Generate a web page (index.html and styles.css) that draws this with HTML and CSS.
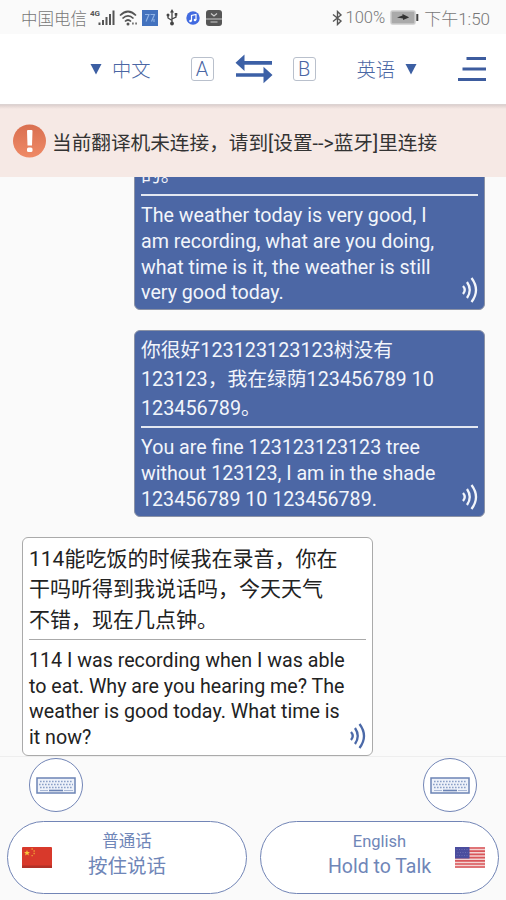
FILE: index.html
```html
<!DOCTYPE html>
<html lang="zh-CN">
<head>
  <meta charset="UTF-8" />
  <meta name="viewport" content="width=device-width, initial-scale=1.0"/>
  <title>翻译机</title>
  <link rel="stylesheet" href="styles.css">
</head>
<body>
  <svg class="defs" width="0" height="0">
    <symbol id="sound" viewBox="0 0 18 28">
      <path d="M2 10Q5.500 14 2 18M6 6Q11.500 14 6 22M10.500 2Q19.500 14 10.500 26" fill="none" stroke="currentColor" stroke-width="2.300"/>
    </symbol>
    <symbol id="keyboard" viewBox="0 0 40 17">
      <rect x="1" y="1" width="38" height="15" fill="#eef2fa" stroke="#6c84b5" stroke-width="1.500"/>
      <path d="M4 4.500H37M3 7.500H37M4 10.500H37" stroke="#8ba0c8" stroke-width="1.600" stroke-dasharray="1.600 1.400"/>
      <path d="M4 13.500H12M28 13.500H37" stroke="#a9b8d6" stroke-width="1"/>
      <path d="M13 13.500H27" stroke="#6c84b5" stroke-width="1.600"/>
    </symbol>
  </svg>

  <div class="status">
    <span class="carrier">中国电信</span>
    <svg class="signal" width="27" height="18" viewBox="0 0 27 18">
      <text x="0" y="7" class="net">4G</text>
      <path d="M9.500 16V13.500M13 16V11M16.500 16V8M20 16V5M23.500 16V1.500" stroke="#555" stroke-width="2"/>
    </svg>
    <svg class="wifi" width="19" height="18" viewBox="0 0 19 18">
      <path d="M1 6.500Q9 -1.500 17 6.500M3.500 9.500Q9 4 14.500 9.500M6 12.500Q9 9.500 12 12.500" fill="none" stroke="#555" stroke-width="1.700"/>
      <circle cx="9" cy="15" r="1.500" fill="#555"/>
      <path d="M13 14.500h1.800M16.200 14.500h1.800" stroke="#777" stroke-width="2"/>
    </svg>
    <svg class="app" width="16" height="16" viewBox="0 0 16 16">
      <rect width="16" height="16" fill="#4372be"/>
      <path d="M3 4.500h4l-3 7M8.500 4.500h4l-3 7M12 9v3" fill="none" stroke="#8fb3e6" stroke-width="1.100"/>
    </svg>
    <svg class="usb" width="12" height="17" viewBox="0 0 12 17">
      <path d="M6 2V14M6 11.500L2 9V6M6 10L10 8V5" fill="none" stroke="#444" stroke-width="1.300"/>
      <path d="M6 0L8 3.500H4z" fill="#444"/>
      <circle cx="6" cy="14.500" r="1.900" fill="#444"/>
      <circle cx="2" cy="6" r="1.500" fill="#444"/>
      <path d="M8.700 4h2.600v2.600h-2.600z" fill="#444"/>
    </svg>
    <svg class="music" width="14" height="14" viewBox="0 0 14 14">
      <circle cx="7" cy="7" r="6.700" fill="#426be0"/>
      <path d="M5.500 10V4.500L10 3.500V9" fill="none" stroke="#fff" stroke-width="1.200"/>
      <circle cx="4.500" cy="10" r="1.300" fill="#fff"/>
      <circle cx="9" cy="9" r="1.300" fill="#fff"/>
    </svg>
    <svg class="box" width="16" height="16" viewBox="0 0 16 16">
      <rect width="16" height="16" rx="3" fill="#565656"/>
      <path d="M0 9H16" stroke="#ccc" stroke-width="1"/>
      <path d="M5 3.500L8 6L11 3.500M4.500 12H11.500" fill="none" stroke="#ccc" stroke-width="1.200"/>
    </svg>
    <span class="spacer"></span>
    <svg class="bt" width="11" height="16" viewBox="0 0 11 16">
      <path d="M1 4.500L9 11L5.500 14.500V1.500L9 5L1 11.500" fill="none" stroke="#555" stroke-width="1.400"/>
    </svg>
    <span class="percent">100%</span>
    <svg class="battery" width="29" height="15" viewBox="0 0 29 15">
      <rect x="1" y="1" width="24" height="13" rx="1.500" fill="#aaa" stroke="#ccc" stroke-width="1.500"/>
      <path d="M7 7.500L12.500 5.500V4L18.500 7L19 7.500L13 10V8.500z" fill="#333"/>
      <path d="M27.300 4V11" stroke="#444" stroke-width="2"/>
    </svg>
    <span class="time">下午1:50</span>
  </div>

  <div class="header">
    <svg class="arrow" width="12" height="11" viewBox="0 0 12 11"><path d="M0.500 0H11.500L6 10.500z" fill="#3c5fa3"/></svg>
    <span class="lang">中文</span>
    <span class="letter letter-a">A</span>
    <svg class="swap" width="38" height="30" viewBox="0 0 38 30">
      <path d="M7 8.800H37M1 21H31" stroke="#3c60a6" stroke-width="3.700"/>
      <path d="M0.500 8.800L9.500 0.500V17zM37.500 21L28.500 12.700V29.300z" fill="#3c60a6"/>
    </svg>
    <span class="letter letter-b">B</span>
    <span class="lang lang-b">英语</span>
    <svg class="arrow arrow-b" width="12" height="11" viewBox="0 0 12 11"><path d="M0.500 0H11.500L6 10.500z" fill="#3c5fa3"/></svg>
    <svg class="menu" width="28" height="26" viewBox="0 0 28 26">
      <path d="M8.500 2.500H28M4.500 13H28M0 23.500H28" stroke="#3d5c9e" stroke-width="3"/>
    </svg>
  </div>

  <div class="warning">
    <svg width="34" height="34" viewBox="0 0 34 34">
      <defs>
        <linearGradient id="orange" x1="0" y1="0" x2="0" y2="1">
          <stop offset="0" stop-color="#d96f50"/>
          <stop offset="1" stop-color="#ef8a66"/>
        </linearGradient>
      </defs>
      <circle cx="17.500" cy="17" r="16.500" fill="url(#orange)"/>
      <path d="M15 7Q15 6 16 6H19.500Q20.500 6 20.500 7L20 21.500H15.500z" fill="#fff"/>
      <rect x="15" y="23.500" width="5.500" height="4.500" rx="1.500" fill="#fff"/>
    </svg>
    <span>当前翻译机未连接，请到[设置--&gt;蓝牙]里连接</span>
  </div>

  <div class="chat">
    <div class="bubble mine">
      <div class="source">的。</div>
      <div class="result">The weather today is very good, I<br>am recording, what are you doing,<br>what time is it, the weather is still<br>very good today.</div>
      <svg class="sound"><use href="#sound"/></svg>
    </div>
    <div class="bubble mine">
      <div class="source">你很好123123123123树没有<br>123123，我在绿荫123456789 10<br>123456789。</div>
      <div class="result">You are fine 123123123123 tree<br>without 123123, I am in the shade<br>123456789 10 123456789.</div>
      <svg class="sound"><use href="#sound"/></svg>
    </div>
    <div class="bubble other">
      <div class="source">114能吃饭的时候我在录音，你在<br>干吗听得到我说话吗，今天天气<br>不错，现在几点钟。</div>
      <div class="result">114 I was recording when I was able<br>to eat. Why are you hearing me? The<br>weather is good today. What time is<br>it now?</div>
      <svg class="sound"><use href="#sound"/></svg>
    </div>
  </div>

  <div class="footer">
    <div class="keys">
      <div class="key"><svg width="40" height="17"><use href="#keyboard"/></svg></div>
      <div class="key"><svg width="40" height="17"><use href="#keyboard"/></svg></div>
    </div>
    <div class="talks">
      <div class="talk">
        <svg class="flag" width="30" height="21" viewBox="0 0 30 21">
          <rect width="30" height="21" rx="1" fill="#d8392b"/>
          <rect y="18.500" width="30" height="2.500" fill="#b23127"/>
          <path d="M5 3L5.800 4.900L7.900 5L6.300 6.400L6.900 8.500L5 7.300L3.100 8.500L3.700 6.400L2.100 5L4.200 4.900z" fill="#f8c43c"/>
          <path d="M9.500 2h1.300M11.500 4h1.300M11.500 6.500h1.300M9.500 8.700h1.300" stroke="#f0a236" stroke-width="1.300"/>
        </svg>
        <div class="label"><span class="small">普通话</span><span class="big">按住说话</span></div>
      </div>
      <div class="talk talk-b">
        <div class="label"><span class="small">English</span><span class="big">Hold to Talk</span></div>
        <svg class="flag" width="30" height="21" viewBox="0 0 30 21">
          <rect width="30" height="21" rx="1" fill="#f3d3d2"/>
          <path d="M0 1H30M0 4.200H30M0 7.400H30M0 10.600H30M0 13.800H30M0 17H30M0 20H30" stroke="#d9565a" stroke-width="1.700"/>
          <rect width="14.500" height="11.500" fill="#4b4d9e"/>
          <path d="M1.500 2.500H13M2.500 5.500H13M1.500 8.500H13" stroke="#6a6cb0" stroke-width="1" stroke-dasharray="1 1.500"/>
        </svg>
      </div>
    </div>
  </div>
</body>
</html>
```

FILE: styles.css
```css
* {
  box-sizing: border-box;
}
body {
  margin: 0;
  width: 506px;
  height: 900px;
  overflow: hidden;
  display: flex;
  flex-direction: column;
  background: #fafafa;
  font-family: Roboto, "Noto Sans CJK SC", sans-serif;
  white-space: nowrap;
}
svg {
  display: block;
  flex: none;
}
.defs {
  position: absolute;
}
.status {
  height: 34px;
  flex: none;
  display: flex;
  align-items: center;
  padding: 1px 16px 0 21px;
  color: #777;
  font-size: 16.5px;
  font-weight: 300;
}
.signal {
  margin-left: 3px;
}
.net {
  font: bold 8px Roboto, sans-serif;
  fill: #555;
}
.wifi {
  margin-left: 2px;
}
.app {
  margin-left: 4px;
}
.usb {
  margin-left: 8px;
}
.music {
  margin-left: 8px;
}
.box {
  margin-left: 6px;
}
.spacer {
  flex: 1;
}
.percent {
  margin-left: 2px;
  font-size: 16.5px;
}
.battery {
  margin: 0 5px 0 5px;
}
.time {
  font-size: 17px;
}
.header {
  height: 71px;
  flex: none;
  display: flex;
  align-items: center;
  padding-left: 90px;
  background: #fff;
  border-bottom: 1px solid #dcd3d2;
  color: #4a66a4;
}
.lang {
  margin-left: 10px;
  font-size: 19.3px;
  font-weight: 300;
}
.letter {
  width: 23px;
  height: 24px;
  border: 1px solid #b9c0cc;
  border-radius: 3px;
  font-size: 20px;
  font-weight: 300;
  line-height: 23px;
  text-align: center;
}
.letter-a {
  margin-left: 40px;
}
.swap {
  margin-left: 21px;
}
.letter-b {
  margin-left: 20px;
}
.lang-b {
  margin-left: 41px;
}
.arrow-b {
  margin-left: 10px;
}
.menu {
  margin-left: 41px;
}
.warning {
  height: 72px;
  flex: none;
  display: flex;
  align-items: center;
  padding-left: 12px;
  gap: 6px;
  background: linear-gradient(#ddd0ce, #f6e9e5 4px);
  color: #333;
  font-size: 19.65px;
}
.chat {
  height: 580px;
  flex: none;
  overflow: hidden;
  display: flex;
  flex-direction: column;
  justify-content: flex-end;
  gap: 20px;
  padding: 0 21px 0 22px;
  border-bottom: 1px solid #eee;
}
.bubble {
  flex: none;
  position: relative;
  width: 351px;
  padding: 6px 6px 4px;
  border: 1px solid #8c93a6;
  border-radius: 6px;
}
.mine {
  align-self: flex-end;
  padding-bottom: 3px;
  background: #4c67a5;
  color: #f2f5fb;
}
.other {
  background: #fff;
  border-color: #aaa;
  color: #222;
}
.source {
  padding-bottom: 3px;
  border-bottom: 2px solid #e3e8f2;
  font-size: 19.8px;
  line-height: 28.7px;
}
.other .source {
  border-bottom: 1px solid #aaa;
  font-size: 21px;
  line-height: 30.7px;
}
.result {
  padding-top: 7px;
  font-size: 19.67px;
  line-height: 25.8px;
}
.other .result {
  padding-top: 8px;
}
.sound {
  position: absolute;
  right: 5px;
  bottom: 5px;
  width: 18px;
  height: 28px;
}
.other .sound {
  color: #4b69a8;
}
.footer {
  flex: 1;
  padding: 1px 7px 0;
}
.keys {
  display: flex;
  justify-content: space-between;
  padding: 0 22px;
}
.key {
  width: 54px;
  height: 54px;
  display: flex;
  align-items: center;
  justify-content: center;
  border: 1.5px solid #7285b6;
  border-radius: 50%;
  background: #fff;
}
.talks {
  display: flex;
  gap: 13px;
  margin-top: 9px;
}
.talk {
  width: 240px;
  height: 73px;
  display: flex;
  align-items: center;
  padding-left: 14px;
  border: 1.5px solid #7285b6;
  border-radius: 37px;
  background: #fff;
  color: #6f86b8;
}
.label {
  width: 120px;
  margin: 0 0 4px 15px;
  display: flex;
  flex-direction: column;
  align-items: center;
}
.small {
  font-size: 16.5px;
  line-height: 22px;
}
.big {
  font-size: 19.5px;
  line-height: 27px;
}
.talk-b .label {
  margin-left: 45px;
}
.talk-b .flag {
  margin-left: 15px;
}
```
